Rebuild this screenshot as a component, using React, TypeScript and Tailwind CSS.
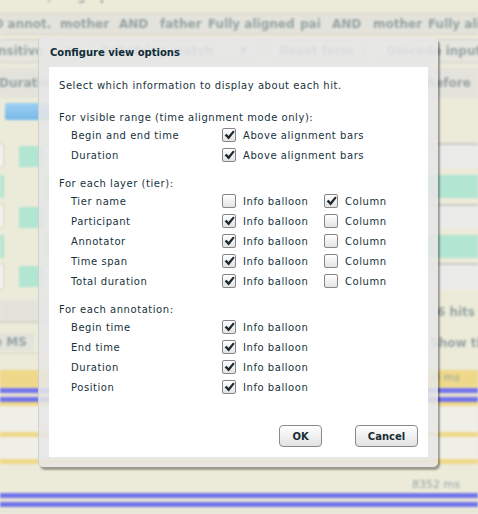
import React from "react";

function Check({ on }: { on: boolean }) {
  return (
    <span className="flex h-[14px] w-[14px] shrink-0 items-center justify-center rounded-[2px] border border-[#858585] bg-linear-to-b from-white to-[#e3e3e3]">
      {on && (
        <svg width="11" height="10" viewBox="0 0 11 10">
          <path d="M0.6 5.3 L2.8 3.8 L4.4 6.1 L9.1 0.4 L10.7 1.7 L4.7 9.5 Z" fill="#1b2830" />
        </svg>
      )}
    </span>
  );
}

function Row1({ label, text }: { label: string; text: string }) {
  return (
    <div className="flex h-[20px] items-center">
      <span className="w-[163px] pl-[12px]">{label}</span>
      <Check on />
      <span className="ml-[7px]">{text}</span>
    </div>
  );
}

function Row2({ label, a, b }: { label: string; a: boolean; b: boolean }) {
  return (
    <div className="flex h-[20px] items-center">
      <span className="w-[163px] pl-[12px]">{label}</span>
      <Check on={a} />
      <span className="ml-[7px] w-[81px]">Info balloon</span>
      <Check on={b} />
      <span className="ml-[7px]">Column</span>
    </div>
  );
}

function Row3({ label }: { label: string }) {
  return (
    <div className="flex h-[20px] items-center">
      <span className="w-[163px] pl-[12px]">{label}</span>
      <Check on />
      <span className="ml-[7px]">Info balloon</span>
    </div>
  );
}

function Heading({ children, className = "" }: { children: React.ReactNode; className?: string }) {
  return <div className={"flex h-[16px] items-center " + className}>{children}</div>;
}

function GrayRow({ h }: { h: string }) {
  return (
    <div className={"flex " + h}>
      <div className="flex w-[45px] shrink-0">
        <div className="h-full w-[4px] rounded-r-[3px] border border-l-0 border-[#cfcfc8] bg-[#f6f6f2]" />
        <div className="ml-[15px] mt-[3px] h-[21px] flex-1 bg-[#b2e5d2]" />
      </div>
      <div className="flex-1 border-t-2 border-[#cbcbc6] bg-[#ebebea]" />
    </div>
  );
}

function TealRow({ h }: { h: string }) {
  return (
    <div className={"flex " + h}>
      <div className="w-[4px] bg-[#b2e5d2]" />
      <div className="w-[41px]" />
      <div className="flex-1 bg-[#b2e5d2]" />
    </div>
  );
}

function Background() {
  return (
    <div className="blur-[1px] text-[#97a3a4]">
      <div className="h-[12px] overflow-hidden">
        <div className="-mt-[11px] pl-[40px] text-[12px] font-bold leading-[14px]">s, 2.0graphics</div>
      </div>
      <div className="mt-[1px] flex h-[22px] items-center whitespace-nowrap border-y border-[#d3d3cb] bg-[#e3e3db] text-[12px] font-bold">
        <span className="-ml-[5px] w-[65px] shrink-0">0 annot.</span>
        <span className="w-[59px] shrink-0">mother</span>
        <span className="w-[41px] shrink-0">AND</span>
        <span className="w-[48px] shrink-0">father</span>
        <span className="w-[92px] shrink-0">Fully aligned</span>
        <span className="w-[32px] shrink-0">pai</span>
        <span className="w-[41px] shrink-0">AND</span>
        <span className="w-[55px] shrink-0">mother</span>
        <span className="shrink-0">Fully aligned</span>
      </div>
      <div className="mt-[4px] flex h-[24px] whitespace-nowrap text-[12px] font-bold">
        <div className="-ml-[2px] flex w-[82px] shrink-0 items-center rounded-[4px] border border-[#d0d0c8] bg-[#e6e6df]">
          <span className="-ml-[1px] w-[60px] overflow-hidden">nsitive</span>
          <span className="flex h-full flex-1 items-center justify-center border-l border-[#d0d0c8] text-[9px]">▼</span>
        </div>
        <div className="ml-[8px] flex w-[172px] shrink-0 items-center justify-between rounded-[4px] border border-[#d0d0c8] bg-[#e6e6df] px-[12px]">
          <span>Substring match</span>
          <span className="text-[9px]">▼</span>
        </div>
        <div className="ml-[8px] flex w-[97px] shrink-0 items-center justify-center rounded-[4px] border border-[#d0d0c8] bg-[#e6e6df]">Reset form</div>
        <div className="ml-[9px] flex w-[120px] shrink-0 items-center rounded-[4px] border border-[#d0d0c8] bg-[#e6e6df] pl-[12px]">Unicode input</div>
      </div>
      <div className="mt-[5px] flex h-[30px] justify-between whitespace-nowrap text-[12px] font-bold">
        <div className="-ml-[2px] flex w-[70px] items-center rounded-[4px] bg-[#e3e3dc] pl-[1px]">Duration</div>
        <div className="flex w-[52px] items-center rounded-l-[4px] bg-[#e3e3dc]">Before</div>
      </div>
      <div className="ml-[5px] mt-[5px] h-[17px] w-[60px] rounded-[2px] bg-linear-to-b from-[#9dd0f3] to-[#78b9e8]" />
      <div className="h-[23px]" />
      <GrayRow h="h-[25px]" />
      <div className="h-[7px]" />
      <TealRow h="h-[23px]" />
      <div className="h-[6px]" />
      <GrayRow h="h-[24px]" />
      <div className="h-[7px]" />
      <TealRow h="h-[23px]" />
      <div className="h-[5px]" />
      <GrayRow h="h-[27px]" />
      <div className="h-[10px]" />
      <div className="flex h-[23px] items-center justify-between whitespace-nowrap text-[12px] font-bold">
        <div className="h-full w-[50px] border-b-2 border-[#d3d3cb] bg-[#e3e3dc]" />
        <span className="mr-[3px]">6 hits</span>
      </div>
      <div className="mt-[10px] flex h-[18px] items-center justify-between whitespace-nowrap text-[12px] font-bold">
        <div className="-ml-[6px] flex h-full w-[40px] items-center rounded-[3px] bg-[#e3e3dc]">e MS</div>
        <span className="-mr-[10px] mt-[2px] w-[58px]">Show time</span>
      </div>
      <div className="mt-[2px] h-[1px] w-[45px] bg-[#d0d0c8]" />
      <div className="h-[16px]" />
      <div className="flex h-[17px] items-center justify-end bg-[#efd889] pr-[18px] text-[11px]">
        <span>0 ms</span>
      </div>
      <div className="h-[1px] bg-[#f3e6b8]" />
      <div className="h-[5px] bg-[#7474ea]" />
      <div className="h-[4px] bg-[#e6dfd0]" />
      <div className="h-[5px] bg-[#7474ea]" />
      <div className="h-[4px] bg-[#efd889]" />
      <div className="h-[26px] bg-[#efefe8]" />
      <div className="h-[5px] bg-[#efd889]" />
      <div className="h-[22px] bg-[#efefe8]" />
      <div className="h-[5px] bg-[#efd889]" />
      <div className="flex h-[29px] items-center justify-end pr-[18px] pt-[13px] text-[11px]">8352 ms</div>
      <div className="h-[5px] bg-[#7474ea]" />
      <div className="h-[4px] bg-[#e6e2d8]" />
      <div className="h-[5px] bg-[#7474ea]" />
      <div className="h-[4px]" />
      <div className="h-[1px] bg-[#d6d6ce]" />
    </div>
  );
}

function Dialog() {
  return (
    <div className="absolute left-[38px] top-[37px] flex h-[430px] w-[400px] flex-col rounded-[5px] border-l border-[#cfcfcc] bg-[#e6e6e6]/85 shadow-[2px_3px_2px_rgba(0,0,0,0.35)]">
      <div className="flex h-[30px] items-center pl-[11px] text-[10px] font-bold text-[#0f2d38]">Configure view options</div>
      <div className="mx-[10px] mb-[10px] flex flex-1 flex-col bg-white px-[10px] pb-[10px] pt-[10px] text-[10px] tracking-[0.55px] text-[#17323d]">
        <Heading>Select which information to display about each hit.</Heading>
        <Heading className="mt-[16px]">For visible range (time alignment mode only):</Heading>
        <Row1 label="Begin and end time" text="Above alignment bars" />
        <Row1 label="Duration" text="Above alignment bars" />
        <Heading className="mt-[10px]">For each layer (tier):</Heading>
        <Row2 label="Tier name" a={false} b={true} />
        <Row2 label="Participant" a={true} b={false} />
        <Row2 label="Annotator" a={true} b={false} />
        <Row2 label="Time span" a={true} b={false} />
        <Row2 label="Total duration" a={true} b={false} />
        <Heading className="mt-[10px]">For each annotation:</Heading>
        <Row3 label="Begin time" />
        <Row3 label="End time" />
        <Row3 label="Duration" />
        <Row3 label="Position" />
        <div className="flex-1" />
        <div className="flex justify-end tracking-normal">
          <button className="flex h-[22px] w-[43px] items-center justify-center rounded-[4px] border border-[#8a8a8a] bg-linear-to-b from-white to-[#e2e2e2] text-[10px] font-bold text-[#1a2c34]">OK</button>
          <button className="ml-[33px] flex h-[22px] w-[63px] items-center justify-center rounded-[4px] border border-[#8a8a8a] bg-linear-to-b from-white to-[#e2e2e2] text-[10px] font-bold text-[#1a2c34]">Cancel</button>
        </div>
      </div>
    </div>
  );
}

export default function App() {
  return (
    <div className="relative h-[514px] w-[478px] overflow-hidden bg-[#ecebda] font-['DejaVu_Sans',sans-serif]">
      <Background />
      <Dialog />
    </div>
  );
}
